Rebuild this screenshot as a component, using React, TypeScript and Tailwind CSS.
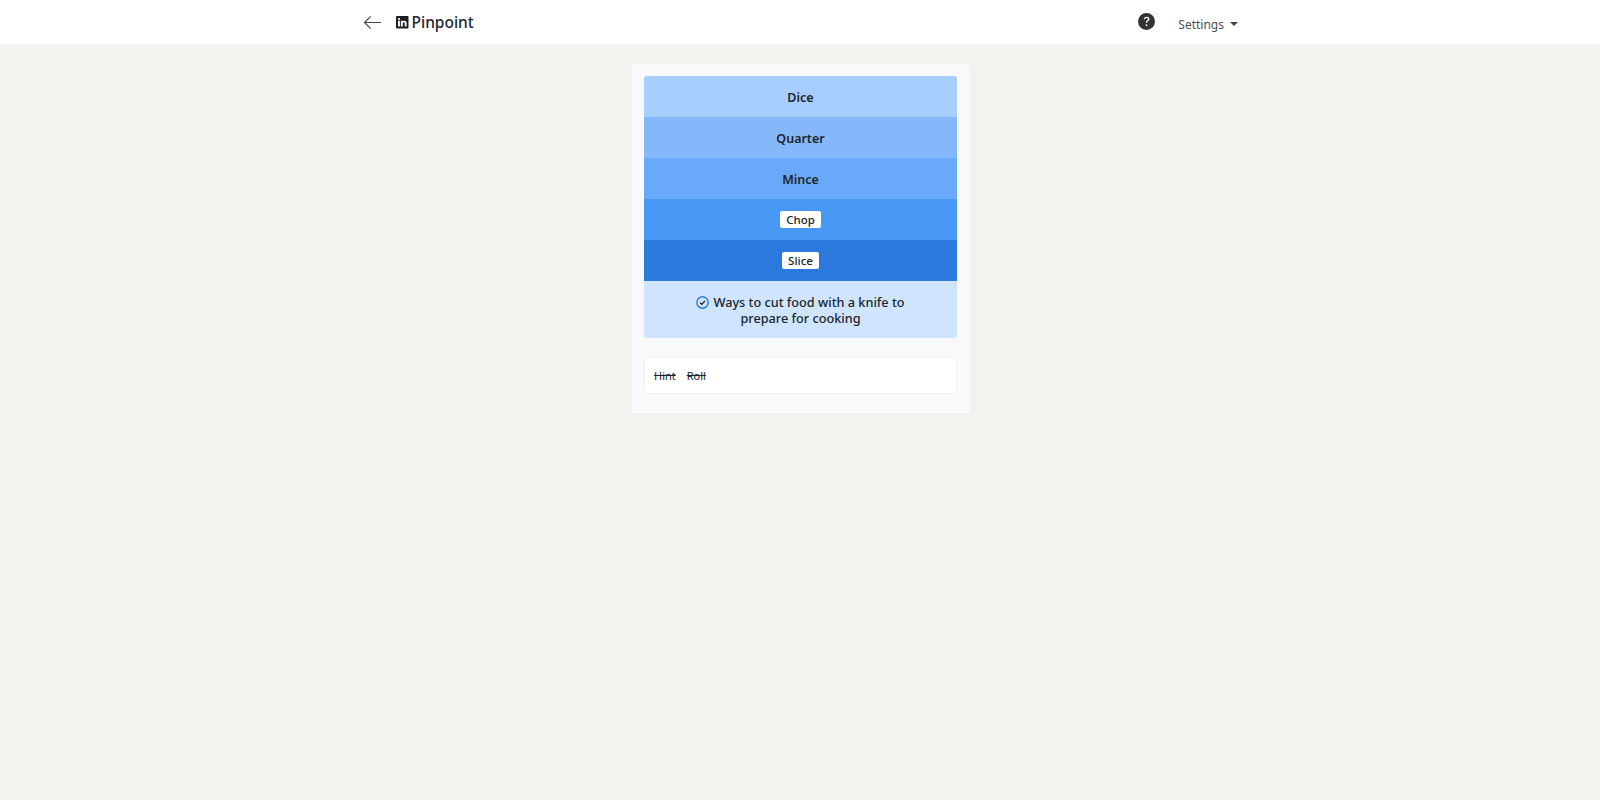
const rows = [
  { label: 'Dice', bg: 'bg-[#a8cdff]', boxed: false },
  { label: 'Quarter', bg: 'bg-[#85b8fb]', boxed: false },
  { label: 'Mince', bg: 'bg-[#69a9f9]', boxed: false },
  { label: 'Chop', bg: 'bg-[#4898f5]', boxed: true },
  { label: 'Slice', bg: 'bg-[#2b79dc]', boxed: true },
]

function LinkedInIcon() {
  return (
    <svg viewBox="0 0 16 16" className="w-[12.500px] h-[12.500px] text-[#1d1d1f]" fill="currentColor">
      <path d="M0 1.15C0 .52.53 0 1.18 0h13.64C15.47 0 16 .52 16 1.15v13.7c0 .63-.53 1.15-1.18 1.15H1.18C.53 16 0 15.48 0 14.85V1.15zm4.94 12.24V6.17H2.55v7.22h2.39zM3.75 5.18c.83 0 1.35-.55 1.35-1.25-.02-.71-.52-1.25-1.33-1.25-.82 0-1.35.54-1.35 1.25 0 .7.52 1.25 1.32 1.25h.01zm4.9 8.21V9.36c0-.22.02-.43.08-.59.17-.43.57-.88 1.23-.88.87 0 1.21.66 1.21 1.63v3.87h2.39V9.25c0-2.22-1.18-3.25-2.75-3.25-1.27 0-1.84.7-2.16 1.19v.03h-.02l.02-.03V6.17H6.26c.03.68 0 7.22 0 7.22h2.39z" />
    </svg>
  )
}

export default function App() {
  return (
    <div className="min-h-[800px] bg-[#f3f2ee] font-['Noto_Sans',sans-serif] text-[#212529]">
      <header className="h-[44px] bg-white">
        <div className="mx-auto w-[900px] h-full flex items-center">
          <svg viewBox="0 0 20 16" className="ml-[13px] w-[19px] h-[15px] text-[#444]" fill="none" stroke="currentColor" strokeWidth="1.3">
            <path d="M19 8H1.500M8 1.500 1.500 8 8 14.500" />
          </svg>
          <div className="ml-[14px] pt-[1px] flex items-center gap-[3px]">
            <LinkedInIcon />
            <span className="text-[15.500px] font-medium text-[#1c2733]">Pinpoint</span>
          </div>
          <div className="ml-auto flex items-center pt-[5px]">
            <svg viewBox="0 0 16 16" className="w-[17px] h-[17px] mb-[7px] text-[#333]" fill="currentColor">
              <path d="M16 8A8 8 0 1 1 0 8a8 8 0 0 1 16 0zM5.500 5.900h1.300c.1-.8.7-1.300 1.400-1.300.7 0 1.200.5 1.200 1 0 .5-.2.8-.8 1.200-.7.5-1.100 1-1.100 1.800v.5h1.300v-.3c0-.6.2-.9.9-1.300.7-.5 1.100-1.100 1.100-1.900 0-1.200-1-2.100-2.500-2.100-1.700 0-2.700 1-2.800 2.400zM8 12.300a.9.900 0 1 0 0-1.800.9.900 0 0 0 0 1.800z" />
            </svg>
            <span className="ml-[23px] text-[12px] text-[#4a4f55]">Settings</span>
            <span className="ml-[6px] mr-[12px] mb-[2px] w-0 h-0 border-x-[4px] border-x-transparent border-t-[4px] border-t-[#444]" />
          </div>
        </div>
      </header>

      <main className="flex justify-center pt-[20px] pl-[2px]">
        <div className="w-[338px] bg-[#f8f9fa] rounded-t-[4px] pl-[12px] pr-[13px] pt-[12px] pb-[19px]">
          <div className="rounded-[3px] overflow-hidden">
            {rows.map((r) => (
              <div key={r.label} className={`h-[41px] flex items-center justify-center text-[12.500px] font-semibold ${r.bg} ${r.boxed ? '' : 'pt-[4px]'}`}>
                {r.boxed ? (
                  <span className="bg-white rounded-[2px] px-[6px] h-[17px] flex items-center font-medium text-[11.500px]">{r.label}</span>
                ) : (
                  r.label
                )}
              </div>
            ))}
            <div className="bg-[#cfe5ff] h-[57px] pt-[14px] text-center text-[12.700px] leading-[15.500px] font-medium">
              <svg viewBox="0 0 16 16" className="inline-block w-[13px] h-[13px] mr-[4px] mb-[2px]" fill="none">
                <circle cx="8" cy="8" r="7" stroke="#2b79dc" strokeWidth="1.700" />
                <path d="M5 8.300 7.200 10.300 11 6" stroke="#1c2733" strokeWidth="1.700" />
              </svg>
              Ways to cut food with a knife to
              <br />
              prepare for cooking
            </div>
          </div>
          <div className="mt-[19px] h-[37px] bg-white border border-[#f0f0f0] rounded-[3px] flex items-center gap-[11px] px-[9px] pt-[1px] text-[11px] line-through">
            <span>Hint</span>
            <span>Roll</span>
          </div>
        </div>
      </main>
    </div>
  )
}
